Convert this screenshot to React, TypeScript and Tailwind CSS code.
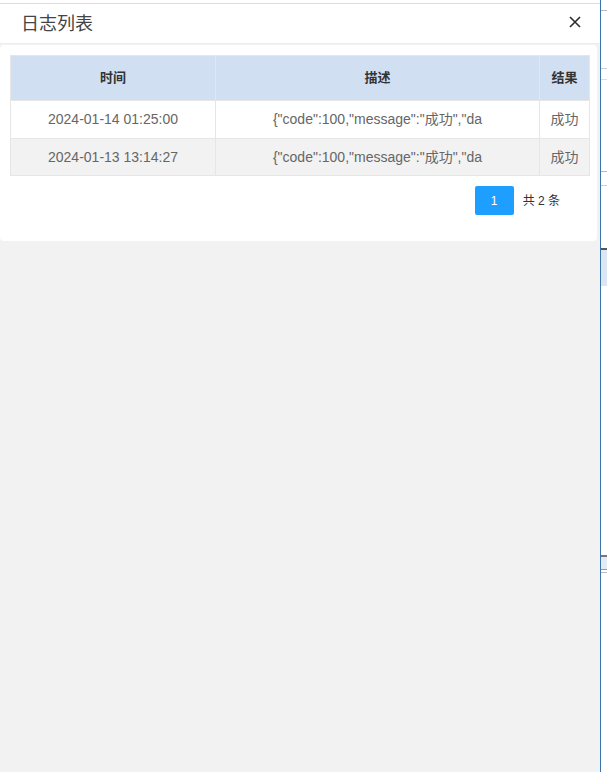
import React from "react";

const rows = [
  { time: "2024-01-14 01:25:00", desc: '{"code":100,"message":"成功","da', result: "成功" },
  { time: "2024-01-13 13:14:27", desc: '{"code":100,"message":"成功","da', result: "成功" },
];

const font = { fontFamily: '"Liberation Sans", Arial, "Noto Sans CJK SC", sans-serif' };

export default function App() {
  return (
    <div className="flex h-[772px] w-[607px] overflow-hidden bg-white" style={font}>
      <div className="flex h-full w-[600px] flex-col bg-[#f2f2f2]">
        <div className="h-[3px] bg-white" />
        <div className="flex h-[41px] items-center justify-between border-t border-[#dcdcdc] border-b border-b-[#eeeeee] bg-white pl-[21px] pr-[19px]">
          <span className="text-[18px] leading-none text-[#444]">日志列表</span>
          <svg width="12" height="12" viewBox="0 0 12 12" className="mt-[-4px]">
            <path d="M1 1L11 11M11 1L1 11" stroke="#2b2b2b" strokeWidth="1.6" />
          </svg>
        </div>
        <div className="mr-[3px] mt-[1px] rounded-[4px] bg-white px-[10px] pb-[26px] pt-[10px]">
          <table className="w-[579px] table-fixed border-collapse text-[14px]">
            <colgroup>
              <col className="w-[205px]" />
              <col className="w-[324px]" />
              <col className="w-[50px]" />
            </colgroup>
            <thead>
              <tr className="h-[45px] bg-[#d0dff2]">
                <th className="border border-[#e6e6e6] text-[13px] font-bold text-[#333]">时间</th>
                <th className="border border-[#e6e6e6] text-[13px] font-bold text-[#333]">描述</th>
                <th className="border border-[#e6e6e6] text-[13px] font-bold text-[#333]">结果</th>
              </tr>
            </thead>
            <tbody>
              {rows.map((r, i) => (
                <tr key={i} className={i === 0 ? "h-[38px] bg-white" : "h-[37px] bg-[#f2f2f2]"}>
                  <td className="border border-[#e6e6e6] text-center text-[#666]">{r.time}</td>
                  <td className="overflow-hidden whitespace-nowrap border border-[#e6e6e6] text-center text-[#666]">{r.desc}</td>
                  <td className="border border-[#e6e6e6] text-center text-[#666]">{r.result}</td>
                </tr>
              ))}
            </tbody>
          </table>
          <div className="mt-[10px] flex items-center justify-end pr-[27px]">
            <div className="flex h-[29px] w-[39px] items-center justify-center rounded-[2px] bg-[#1e9fff] text-[12px] text-white">1</div>
            <span className="ml-[9px] text-[12px] text-[#333]">共 2 条</span>
          </div>
        </div>
      </div>
      <div className="flex h-full w-[7px] flex-col border-l-[1.5px] border-[#3a74ad] bg-white">
        <div className="mt-[10px] h-px bg-[#bbb]" />
        <div className="mt-[57px] h-px bg-[#ccc]" />
        <div className="mt-[10px] h-px bg-[#ddd]" />
        <div className="mt-[91px] h-px bg-[#bbb]" />
        <div className="mt-[13px] h-px bg-[#ccc]" />
        <div className="mt-[62px] h-[2px] bg-[#555]" />
        <div className="h-[36px] bg-[#dce6f2]" />
        <div className="mt-[269px] h-[2px] bg-[#777]" />
        <div className="h-[12px] bg-[#e3ecf6]" />
        <div className="h-px bg-[#999]" />
        <div className="mt-[2px] h-px bg-[#bbb]" />
      </div>
    </div>
  );
}
